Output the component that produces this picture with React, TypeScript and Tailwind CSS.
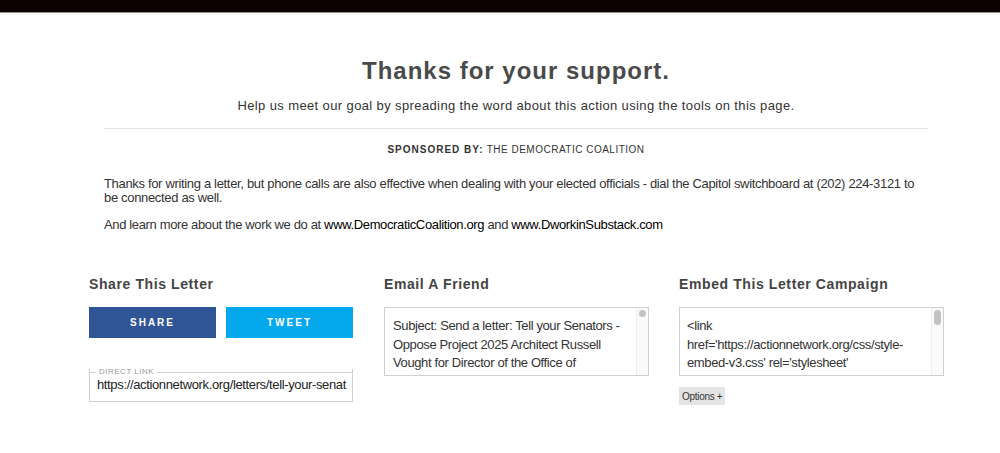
import React from "react";

export default function App() {
  const font = { fontFamily: '"Liberation Sans", Arial, Helvetica, sans-serif' };
  return (
    <div className="w-[1000px] h-[453px] bg-white overflow-hidden text-[#333]" style={font}>
      <div className="h-[13px] bg-[#0c0201] border-b border-[#9a9080]" />
      <div className="w-[824px] ml-[104px]">
        <h1 className="mt-[44px] text-center text-[24px] leading-[28px] font-bold tracking-[1px] text-[#4a4a4a]">
          Thanks for your support.
        </h1>
        <p className="mt-[13px] text-center text-[13px] leading-[16px] tracking-[0.38px] text-[#333]">
          Help us meet our goal by spreading the word about this action using the tools on this page.
        </p>
        <div className="mt-[14px] border-t border-[#e3e3e3]" />
        <p className="mt-[14px] text-center text-[10px] leading-[14px] tracking-[0.5px] text-[#333]">
          <span className="font-bold tracking-[1px]">SPONSORED BY:</span> THE DEMOCRATIC COALITION
        </p>
        <p className="mt-[20px] text-[13px] leading-[14px] tracking-[-0.33px] text-[#333]">
          Thanks for writing a letter, but phone calls are also effective when dealing with your elected officials - dial the Capitol switchboard at (202) 224-3121 to be connected as well.
        </p>
        <p className="mt-[13px] text-[13px] leading-[14px] tracking-[-0.36px] text-[#333]">
          And learn more about the work we do at <span className="text-black">www.DemocraticCoalition.org</span> and{" "}
          <span className="text-black">www.DworkinSubstack.com</span>
        </p>
      </div>
      <div className="ml-[89px] mt-[44px] grid grid-cols-[265px_265px_265px] gap-x-[30px]">
        <div>
          <h2 className="text-[14px] leading-[16px] font-bold tracking-[0.6px] text-[#444]">Share This Letter</h2>
          <div className="mt-[15px] flex gap-[10px]">
            <div className="w-[127px] h-[31px] bg-[#2f5596] text-white text-[10px] font-bold tracking-[2px] flex items-center justify-center">
              SHARE
            </div>
            <div className="w-[127px] h-[31px] bg-[#04a8ec] text-white text-[10px] font-bold tracking-[2px] flex items-center justify-center">
              TWEET
            </div>
          </div>
          <div className="relative mt-[31px] w-[264px] h-[33px] border border-[#cfcfcf] border-t-0">
            <div className="absolute left-0 right-0 top-0 flex items-center">
              <div className="w-[6px] border-t border-[#cfcfcf]" />
              <span className="px-[3px] text-[8px] leading-[8px] tracking-[0.5px] text-[#999] -mt-[1px]">DIRECT LINK</span>
              <div className="flex-1 border-t border-[#cfcfcf]" />
            </div>
            <div className="pt-[8px] pl-[7px] text-[13px] leading-[16px] tracking-[-0.36px] whitespace-nowrap overflow-hidden text-[#222]">
              https://actionnetwork.org/letters/tell-your-senat
            </div>
          </div>
        </div>
        <div>
          <h2 className="text-[14px] leading-[16px] font-bold tracking-[0.6px] text-[#444]">Email A Friend</h2>
          <div className="mt-[15px] w-[265px] h-[69px] border border-[#cfcfcf] flex overflow-hidden">
            <div className="flex-1 pl-[8px] pt-[9px] text-[13px] leading-[18.5px] tracking-[-0.38px] text-[#333]">
              Subject: Send a letter: Tell your Senators - Oppose Project 2025 Architect Russell Vought for Director of the Office of
            </div>
            <div className="w-[12px] border-l border-[#eeeeee] bg-[#fafafa] flex justify-center pt-[2px]">
              <div className="w-[7px] h-[7px] rounded-full bg-[#c2c2c2]" />
            </div>
          </div>
        </div>
        <div>
          <h2 className="text-[14px] leading-[16px] font-bold tracking-[0.6px] text-[#444]">Embed This Letter Campaign</h2>
          <div className="mt-[15px] w-[265px] h-[69px] border border-[#cfcfcf] flex overflow-hidden">
            <div className="flex-1 pl-[7px] pt-[9px] text-[13px] leading-[18.5px] tracking-[-0.38px] text-[#333]">
              &lt;link href='https://actionnetwork.org/css/style-embed-v3.css' rel='stylesheet'
            </div>
            <div className="w-[12px] border-l border-[#eeeeee] bg-[#fafafa] flex justify-center pt-[2px]">
              <div className="w-[7px] h-[15px] rounded-full bg-[#c2c2c2]" />
            </div>
          </div>
          <div className="mt-[11px] inline-flex items-center h-[18px] px-[3px] bg-[#e4e4e4] text-[10px] tracking-[-0.3px] text-[#333]">
            Options +
          </div>
        </div>
      </div>
    </div>
  );
}
